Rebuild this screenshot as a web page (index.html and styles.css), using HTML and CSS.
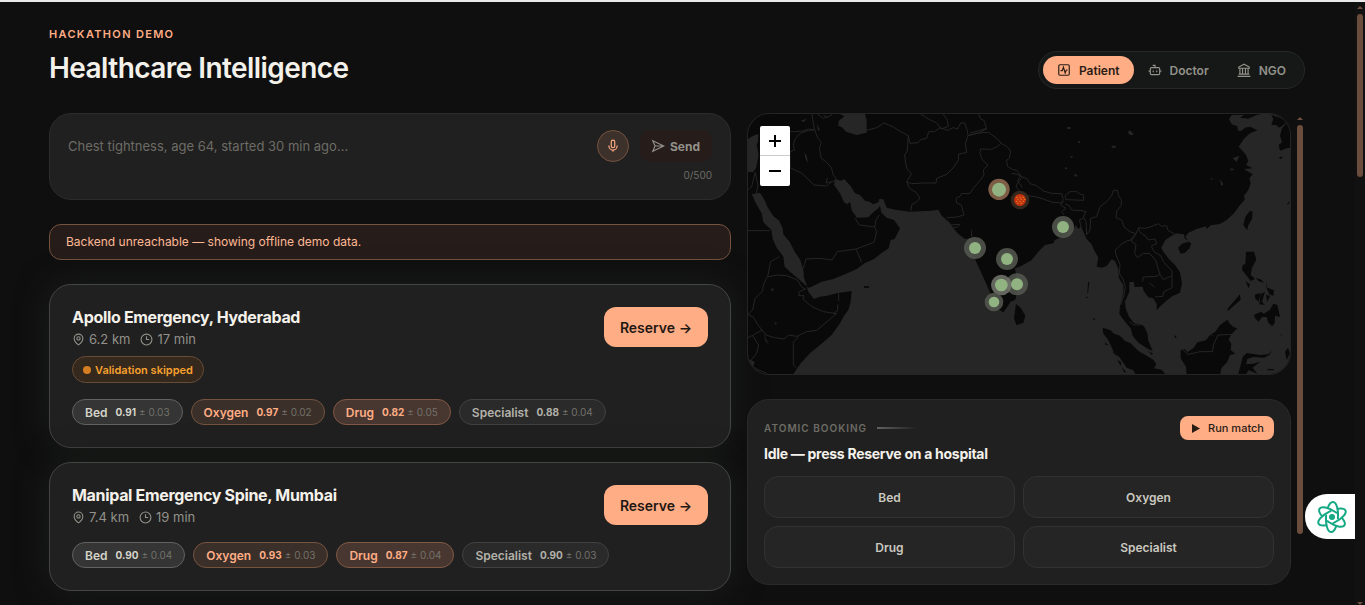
FILE: index.html
```html
<!DOCTYPE html>
<html lang="en">
<head>
<meta charset="utf-8">
<meta name="viewport" content="width=device-width, initial-scale=1">
<title>Healthcare Intelligence</title>
<link rel="stylesheet" href="styles.css">
</head>
<body>
<div class="page">
  <header class="header">
    <div class="brand">
      <p class="eyebrow">Hackathon demo</p>
      <h1 class="title">Healthcare Intelligence</h1>
    </div>
    <nav class="tabs" aria-label="Role">
      <button class="tab tab-active" type="button">
        <svg class="icon" viewBox="0 0 24 24"><rect x="3" y="3" width="18" height="18" rx="2"/><path d="M6 13h3l2-6 3 10 2-5h2"/></svg>
        Patient
      </button>
      <button class="tab" type="button">
        <svg class="icon" viewBox="0 0 24 24"><path d="M12 8V4H8"/><rect x="4" y="8" width="16" height="12" rx="2"/><path d="M1 14H4M20 14h3M9 13v3M15 13v3"/></svg>
        Doctor
      </button>
      <button class="tab" type="button">
        <svg class="icon" viewBox="0 0 24 24"><path d="M12 2 3 7v2h18V7zM5 10v9M9.500 10v9M14.500 10v9M19 10v9M3 19h18M1 23h22"/></svg>
        NGO
      </button>
    </nav>
  </header>

  <main class="columns">
    <section class="main-column">
      <form class="composer">
        <div class="composer-row">
          <input class="symptoms" type="text" aria-label="Symptoms" placeholder="Chest tightness, age 64, started 30 min ago...">
          <button class="mic" type="button" aria-label="Dictate">
            <svg class="icon" viewBox="0 0 24 24"><rect x="9" y="2" width="6" height="13" rx="3"/><path d="M5 11v1a7 7 0 0 0 14 0v-1M12 19v3"/></svg>
          </button>
          <button class="send" type="button">
            <svg class="icon" viewBox="0 0 24 24"><path d="M3 3 22 12 3 21l4-9zM7 12h15"/></svg>
            Send
          </button>
        </div>
        <p class="counter">0/500</p>
      </form>

      <p class="notice">Backend unreachable — showing offline demo data.</p>

      <div class="results">
        <article class="hospital">
          <div class="hospital-top">
            <div class="hospital-info">
              <h2 class="hospital-name">Apollo Emergency, Hyderabad</h2>
              <p class="meta">
                <span class="meta-item"><svg class="icon" viewBox="0 0 24 24"><path d="M20 10c0 6-8 12-8 12s-8-6-8-12a8 8 0 0 1 16 0z"/><circle cx="12" cy="10" r="3"/></svg>6.2 km</span>
                <span class="meta-item"><svg class="icon" viewBox="0 0 24 24"><circle cx="12" cy="12" r="10"/><path d="M12 6v6h5"/></svg>17 min</span>
              </p>
              <p class="badge"><span class="badge-dot"></span>Validation skipped</p>
            </div>
            <button class="reserve" type="button">Reserve →</button>
          </div>
          <ul class="chips">
            <li class="chip chip-neutral"><b class="chip-label">Bed</b><b>0.91</b><span class="margin">± 0.03</span></li>
            <li class="chip chip-warm"><b class="chip-label">Oxygen</b><b>0.97</b><span class="margin">± 0.02</span></li>
            <li class="chip chip-hot"><b class="chip-label">Drug</b><b>0.82</b><span class="margin">± 0.05</span></li>
            <li class="chip"><b class="chip-label">Specialist</b><b>0.88</b><span class="margin">± 0.04</span></li>
          </ul>
        </article>
        <article class="hospital">
          <div class="hospital-top">
            <div class="hospital-info">
              <h2 class="hospital-name">Manipal Emergency Spine, Mumbai</h2>
              <p class="meta">
                <span class="meta-item"><svg class="icon" viewBox="0 0 24 24"><path d="M20 10c0 6-8 12-8 12s-8-6-8-12a8 8 0 0 1 16 0z"/><circle cx="12" cy="10" r="3"/></svg>7.4 km</span>
                <span class="meta-item"><svg class="icon" viewBox="0 0 24 24"><circle cx="12" cy="12" r="10"/><path d="M12 6v6h5"/></svg>19 min</span>
              </p>
            </div>
            <button class="reserve" type="button">Reserve →</button>
          </div>
          <ul class="chips">
            <li class="chip chip-neutral"><b class="chip-label">Bed</b><b>0.90</b><span class="margin">± 0.04</span></li>
            <li class="chip chip-warm"><b class="chip-label">Oxygen</b><b>0.93</b><span class="margin">± 0.03</span></li>
            <li class="chip chip-hot"><b class="chip-label">Drug</b><b>0.87</b><span class="margin">± 0.04</span></li>
            <li class="chip"><b class="chip-label">Specialist</b><b>0.90</b><span class="margin">± 0.03</span></li>
          </ul>
        </article>
      </div>
    </section>

    <aside class="side-column">
      <div class="side-content">
        <section class="map" aria-label="Hospital map">
          <svg class="map-canvas" viewBox="24 27 1626 780" preserveAspectRatio="xMidYMid slice">
            <rect class="land" x="0" y="0" width="1700" height="840"/>
            <g class="sea">
              <path d="M200 545 205 560 222 582 240 575 258 573 290 565 335 558 332 590 325 615 312 632 300 655 275 690 250 712 210 745 182 775 158 810 1660 810 1660 0 1600 20 1550 30 1525 41 1500 38 1512 29 1475 30 1467 42 1475 58 1492 64 1494 77 1505 77 1515 68 1530 65 1552 76 1530 85 1512 101 1496 125 1510 140 1518 150 1525 168 1518 180 1538 190 1512 192 1538 208 1528 220 1532 235 1525 255 1512 272 1514 284 1500 300 1482 325 1460 345 1440 357 1412 361 1400 372 1398 364 1370 372 1345 383 1336 395 1344 407 1334 400 1332 388 1308 385 1295 392 1276 405 1264 428 1270 440 1285 460 1305 480 1320 502 1326 535 1320 563 1298 573 1282 585 1265 600 1250 615 1250 597 1240 580 1225 577 1211 558 1208 545 1184 546 1181 530 1168 532 1168 560 1155 590 1157 610 1167 635 1182 655 1200 658 1212 664 1222 684 1225 707 1238 738 1220 730 1194 712 1178 692 1172 670 1155 650 1138 627 1140 602 1150 565 1150 540 1137 520 1135 493 1125 468 1115 463 1100 483 1085 488 1070 485 1075 458 1062 435 1055 418 1040 402 1032 385 1023 365 1014 372 1008 360 1000 372 980 388 960 398 944 405 940 415 915 420 895 440 875 465 845 482 825 490 829 515 832 560 826 584 812 590 800 608 790 622 778 614 765 595 750 562 735 528 712 478 700 450 697 400 675 402 655 387 640 370 628 352 605 332 595 314 575 317 510 320 470 315 440 308 430 283 418 282 415 292 400 298 388 290 375 287 360 270 345 265 332 243 312 222 303 227 285 222 282 240 300 265 312 292 322 298 330 290 336 318 345 330 350 338 385 337 400 322 415 310 420 302 424 323 440 338 462 345 480 370 464 402 452 405 446 430 425 444 402 462 375 474 350 492 315 508 280 522 245 530 208 548z"/>
              <path d="M36 268 60 263 75 287 82 305 100 333 118 348 128 370 130 388 150 412 164 440 181 465 190 495 192 518 202 545 180 526 150 500 134 485 130 455 110 428 98 402 94 375 70 352 65 325 45 290z"/>
              <path d="M24 102 36 94 55 86 54 110 50 120 56 150 48 190 38 202 24 200z"/>
              <path d="M300 27 375 27 380 45 380 83 350 90 318 80 308 68 295 62 296 48 313 34z"/>
              <path d="M1163 82 1170 76 1178 84 1180 90 1170 90zM982 66h9v6h-9zM1014 108h5v6h-5zM1115 122h12v6h-12zM990 154h10l-6 6zM975 186l9 4-9 3zM1002 207l12 3-9 6zM1470 190l14 3-10 4zM1478 160l20-8-8 18zM1412 218l8 4-7 2zM1440 222l10 16-6 6zM193 140l8 16 3 18-8-14zM230 55l10 20-6 2zM184 46l16-4-10 10zM92 552l10-2-5 10zM72 684l6 18 8 16-10-10zM24 762l20 8-4 14-16-6zM104 652l8 2-7 5z"/>
            </g>
            <g class="land">
              <path d="M828 597 842 608 856 632 850 653 830 661 822 640z"/>
              <path d="M1314 428 1326 416 1345 410 1354 415 1348 430 1335 443 1322 446z"/>
              <path d="M1530 317 1538 320 1536 342 1524 362 1522 376 1510 360 1516 335z"/>
              <path d="M1518 440 1542 440 1549 464 1536 488 1532 510 1545 522 1532 528 1518 510 1506 494 1508 480 1516 478z"/>
              <path d="M1548 518 1564 524 1572 534 1555 528zM1578 528 1582 548 1602 556 1600 572 1588 568 1580 550zM1545 568 1562 565 1556 590 1545 580zM1562 568 1575 560 1566 590 1575 600 1558 598zM1578 570 1590 572 1582 590zM1516 528 1530 538 1526 550zM1500 568 1502 584 1464 618 1462 612zM1545 640 1542 630 1562 620 1572 626 1590 614 1600 596 1612 600 1620 636 1605 632 1604 655 1596 664 1584 652 1580 636 1566 636 1556 650z"/>
              <path d="M1088 668 1112 676 1122 686 1140 692 1155 708 1172 715 1195 738 1220 752 1240 764 1249 778 1242 790 1265 794 1278 810 1188 810 1180 796 1160 788 1138 756 1120 738 1105 705 1090 686z"/>
              <path d="M1095 712l10 8-8 0zM1118 738l12 10 4 8-14-12zM1132 764l12 8-2 12zM1144 786l14 14-4 4zM1225 738l14 8-4 4z"/>
              <path d="M1322 735 1334 732 1342 741 1360 730 1372 712 1398 706 1410 690 1426 680 1440 660 1462 644 1470 656 1480 666 1492 670 1474 688 1466 704 1474 716 1472 735 1486 746 1470 750 1462 770 1444 790 1440 810 1340 810 1338 785 1322 760z"/>
              <path d="M1494 810 1502 780 1508 756 1520 744 1560 750 1586 748 1596 736 1588 750 1572 758 1540 756 1522 762 1518 778 1540 776 1560 770 1538 788 1552 806 1526 796 1516 810zM1635 740 1644 728 1650 745 1640 765zM1582 792h20v4h-20zM1622 683l3 8-2 1zM1304 690l6 6-5 4zM1060 640h4v5h-4zM1044 532h4l-4 32h-2zM1038 575h4v5h-4zM372 543l16 1-2 5-14-1z"/>
              <path d="M1594 30 1620 38 1636 46 1638 54 1618 68 1608 60 1594 60 1600 42z"/>
              <path d="M1660 40 1638 56 1626 70 1620 92 1626 112 1616 120 1620 137 1640 130 1650 128 1660 127zM1615 158 1628 154 1624 162zM1640 298l10-10-4 10z"/>
            </g>
            <g class="borders">
              <path d="M216 27 220 55 224 75 234 100 244 112 238 130 244 160 260 172 274 188 280 210 290 222M224 75 205 72 190 78 160 80 148 80M224 75 205 76 180 85 164 104 160 122 164 135 150 140 150 188 186 205 222 240 260 243 275 230 290 225M262 218 258 234 275 230M232 27 250 40 270 33 278 27M250 30 262 38"/>
              <path d="M380 76 410 68 432 54 460 66 482 80 505 92 510 115 534 113 542 104 560 100 566 80 584 80 600 68 622 76 640 68 652 72 662 54 674 54 682 76 684 92 715 84 740 72M505 92 503 118 502 138 494 150 497 176 502 194 515 206 500 230 515 236 550 234 588 234 590 220 620 208 640 188 656 164 655 148 680 142 676 116 684 92M500 230 508 250 528 262 540 280 530 290 516 298 512 318"/>
              <path d="M542 27 566 42 590 54 604 72 625 64 622 46 610 27M716 27 722 42 732 46 740 72M740 70 715 78 690 84M684 92 715 84 745 82 768 98 784 115 772 124 755 133 722 132 720 146 728 166 744 180 730 194 732 210 722 224 700 250 690 265 664 266 660 274 648 280 650 294 664 300 668 315 672 330 650 336 620 338M784 115 800 124 812 138 808 160 800 165 802 184 815 192 830 196 842 212 832 228 840 236 846 248M695 374v20l12 8M630 360l30-2-8 8-20 4"/>
              <path d="M815 205 832 208 848 216 862 222 870 236 890 242 910 258 935 265 965 266 970 284 964 294 938 292 910 282 886 275 860 272 840 260 828 246 835 230 848 216M978 284 975 272 990 260 1010 260 1022 268 1031 270 1031 286 1005 285 985 284zM970 290 962 300 978 310 965 320 972 330M975 296 990 304 994 315 1026 317 1038 320 1030 336 1038 350 1040 390M1030 340 1018 345 1022 360 1028 388M1040 388 1050 376 1052 340 1070 335 1080 305 1100 290 1115 272 1120 256 1132 256 1136 272 1144 285 1144 302 1130 318 1128 338 1146 346 1152 366 1170 380 1188 386"/>
              <path d="M1188 386 1176 404 1160 408 1146 416 1126 435 1128 450 1140 478 1138 505 1150 525 1156 545 1152 570 1142 600M1188 386 1176 398 1175 410 1188 418 1184 445 1192 458 1210 445 1230 446 1248 468 1252 484 1260 508 1248 514 1210 516 1208 530M1188 386 1196 368 1216 370 1230 366 1256 356 1264 364 1280 362 1284 376 1302 386M1196 368 1198 380 1218 395 1225 405 1245 402 1250 415 1234 424 1242 440 1262 452 1270 470 1296 498 1296 548 1272 560 1268 574 1245 576M1260 508 1270 524 1296 512M1168 650 1182 660 1200 660M1228 534l16 12M1326 732 1344 748 1380 740 1418 740 1420 720 1434 690 1480 688M1406 680 1416 692"/>
              <path d="M46 205 54 240 48 268 36 268M46 200 35 245 24 255M24 377H90M344 338 358 360 404 366 410 380 402 412 348 432 292 440 276 465 240 460 198 462 190 490M348 432 365 472M404 366 408 345 418 330M118 455 92 470 84 510 70 540 68 558 45 580 38 615 24 628M84 516 110 510 140 512 172 525 184 545 196 552 178 560 176 572 192 572 190 584 216 605 250 620 290 626 230 676 200 680 170 694 146 690 132 702 104 698 78 690 66 675 54 660 40 636 24 628M66 675 40 690 24 698M176 694 160 712V780L170 790M38 692 56 720 50 745 34 765M24 775 50 792 80 805M296 565V588M294 598 292 618 280 626"/>
            </g>
            <g class="marker">
              <circle class="halo halo-brown" cx="777" cy="253" r="32"/><circle class="dot" cx="777" cy="254" r="21"/>
              <circle class="halo halo-dark" cx="840" cy="285" r="28"/><circle class="dot dot-red" cx="840" cy="285" r="18"/>
              <path class="hatch" d="M828 277h4m6 0h4m6 0h4m-20 6h4m6 0h4m6 0h4m-28 6h4m6 0h4m6 0h4m-20 6h4m6 0h4"/>
              <circle class="halo" cx="969" cy="366" r="33"/><circle class="dot" cx="969" cy="366" r="18"/>
              <circle class="halo" cx="705" cy="429" r="33"/><circle class="dot" cx="705" cy="429" r="18"/>
              <circle class="halo" cx="801" cy="462" r="33"/><circle class="dot" cx="801" cy="462" r="18"/>
              <circle class="halo" cx="831" cy="538" r="33"/><circle class="halo halo-light" cx="784" cy="540" r="31"/>
              <circle class="dot" cx="831" cy="538" r="18"/><circle class="dot" cx="784" cy="540" r="19"/>
              <circle class="halo" cx="762" cy="591" r="28"/><circle class="dot" cx="762" cy="591" r="16"/>
            </g>
          </svg>
          <div class="zoom">
            <button class="zoom-button" type="button" aria-label="Zoom in"><svg viewBox="0 0 12 12"><path d="M6 0v12M0 6h12"/></svg></button>
            <button class="zoom-button" type="button" aria-label="Zoom out"><svg viewBox="0 0 12 12"><path d="M0 6h12"/></svg></button>
          </div>
        </section>

        <section class="booking">
          <div class="booking-top">
            <p class="booking-label">Atomic booking</p>
            <button class="run" type="button"><svg viewBox="0 0 8 9"><path d="M0 0v9l8-4.500z"/></svg>Run match</button>
          </div>
          <h2 class="booking-title">Idle — press Reserve on a hospital</h2>
          <div class="resources">
            <div class="resource">Bed</div>
            <div class="resource">Oxygen</div>
            <div class="resource">Drug</div>
            <div class="resource">Specialist</div>
          </div>
        </section>
      </div>
      <div class="side-scroll" aria-hidden="true"><span class="arrow"></span><span class="side-thumb"></span></div>
    </aside>
  </main>
</div>

<div class="page-scroll" aria-hidden="true"><span class="arrow"></span><span class="page-thumb"></span><span class="arrow arrow-down"></span></div>

<button class="assistant" type="button" aria-label="Open assistant">
  <svg viewBox="0 0 36 36">
    <g class="orbits">
      <ellipse cx="18" cy="18" rx="15" ry="6" pathLength="100" transform="rotate(94 18 18)"/>
      <ellipse cx="18" cy="18" rx="15" ry="6" pathLength="100" transform="rotate(34 18 18)"/>
      <ellipse cx="18" cy="18" rx="15" ry="6" pathLength="100" transform="rotate(-26 18 18)"/>
    </g>
    <circle class="core" cx="18" cy="18" r="3"/>
  </svg>
</button>
</body>
</html>
```
FILE: styles.css
```css
* { box-sizing: border-box; }

body {
  margin: 0;
  min-height: 100vh;
  overflow: hidden;
  border-top: 2px solid #e9e9e9;
  background: #0f0f0f;
  color: #f4f1ea;
  font-family: Inter, "Liberation Sans", sans-serif;
  font-size: 13px;
}

h1, h2, p, ul { margin: 0; padding: 0; }
ul { list-style: none; }
button, input { font: inherit; color: inherit; border: 0; margin: 0; padding: 0; background: none; }

.icon {
  width: 14px;
  height: 14px;
  flex: none;
  fill: none;
  stroke: currentColor;
  stroke-width: 2;
}

.page { padding: 24px 60px 14px 49px; }

/* Header */
.header {
  display: flex;
  justify-content: space-between;
  align-items: flex-end;
  margin-bottom: 24px;
}
.eyebrow {
  color: #ffad85;
  font-size: 11px;
  font-weight: 600;
  line-height: 16px;
  letter-spacing: 0.12em;
  text-transform: uppercase;
}
.title {
  margin: 8px 0 3px;
  font-size: 28px;
  font-weight: 600;
  line-height: 36px;
  letter-spacing: -0.02em;
}
.tabs {
  display: flex;
  padding: 4px;
  border: 1px solid #262827;
  border-radius: 20px;
  background: #161817;
}
.tab {
  display: flex;
  align-items: center;
  gap: 8px;
  height: 28px;
  padding: 0 14px;
  border-radius: 14px;
  color: #92918a;
  font-size: 12px;
  font-weight: 600;
}
.tab-active { background: #ffad85; color: #2a1c15; }

/* Columns */
.columns { display: flex; gap: 16px; }
.main-column { flex: 11 1 0; min-width: 0; }
.side-column { flex: 9 1 0; min-width: 0; display: flex; gap: 4px; }
.side-content { flex: 1; min-width: 0; }

/* Composer */
.composer {
  padding: 16px 18px;
  border: 1px solid #2c2c2c;
  border-radius: 22px;
  background: #202020;
}
.composer-row { display: flex; align-items: center; }
.symptoms { flex: 1; min-width: 0; height: 32px; outline: 0; }
.symptoms::placeholder { color: #6d6c65; opacity: 1; }
.mic {
  display: grid;
  place-items: center;
  width: 32px;
  height: 32px;
  margin-right: 11px;
  border: 1px solid #76533f;
  border-radius: 50%;
  background: #3d312b;
  color: #ffad85;
}
.send {
  display: flex;
  align-items: center;
  gap: 5px;
  height: 32px;
  padding: 0 12px 0 11px;
  border-radius: 10px;
  background: #261c1a;
  color: #92918a;
  font-size: 12px;
  font-weight: 700;
}
.counter { padding-top: 6px; color: #6d6c65; font-size: 10px; line-height: 15px; text-align: right; }

.notice {
  margin: 24px 0;
  padding: 8px 16px;
  border: 1px solid #76533f;
  border-radius: 12px;
  background: #261d1b;
  color: #ffb893;
  font-size: 12px;
  line-height: 18px;
}

/* Hospitals */
.results { display: grid; gap: 14px; }
.hospital {
  padding: 22px;
  border: 1px solid #434543;
  border-radius: 22px;
  background: #202020;
  box-shadow: 0 0 32px #1a1e1b;
}
.hospital-top { display: flex; justify-content: space-between; align-items: flex-start; }
.hospital-name { font-size: 16px; font-weight: 700; line-height: 20px; letter-spacing: -0.02em; }
.meta { display: flex; gap: 10px; margin-top: 3px; color: #92918a; font-size: 13px; line-height: 18px; }
.meta-item { display: flex; align-items: center; gap: 4px; }
.meta .icon { width: 13px; height: 13px; }
.badge {
  display: inline-flex;
  align-items: center;
  gap: 4px;
  height: 27px;
  margin-top: 8px;
  padding: 0 10px;
  border: 1px solid #684c36;
  border-radius: 14px;
  background: #35281d;
  color: #f7a12f;
  font-size: 11px;
  font-weight: 600;
}
.badge-dot { width: 8px; height: 8px; border-radius: 50%; background: #d77d22; }
.reserve {
  height: 40px;
  padding: 0 16px;
  border-radius: 12px;
  background: #ffad85;
  color: #1f1712;
  font-size: 14px;
  font-weight: 600;
}
.chips { display: flex; flex-wrap: wrap; gap: 8px; margin-top: 16px; }
.chip {
  display: flex;
  align-items: center;
  height: 26px;
  padding: 0 12px;
  border: 1px solid #414141;
  border-radius: 13px;
  background: #2a2a2a;
  color: #b3b1a9;
  font-size: 10px;
}
.chip b { font-weight: 700; }
.chip .chip-label { margin-right: 8px; font-size: 12px; font-weight: 600; }
.chip-neutral { border-color: #60635f; background: #343534; color: #d5d3c9; }
.chip-warm { border-color: #76533f; background: #3a2f29; color: #ffad85; }
.chip-hot { border-color: #805843; background: #483730; color: #ffad85; }
.margin { margin-left: 3px; color: #73716b; }

/* Map */
.map {
  position: relative;
  overflow: hidden;
  border: 1px solid #242424;
  border-radius: 22px;
  background: #262626;
}
.map-canvas { display: block; width: 100%; }
.land { fill: #090909; }
.sea { fill: #262626; }
.borders { fill: none; stroke: #252525; stroke-width: 3; stroke-linejoin: round; }
.halo { fill: #555951; fill-opacity: 0.85; }
.halo-brown { fill: #936c52; }
.halo-dark { fill: #3b2c20; }
.halo-light { fill: #74766d; }
.dot { fill: #91b381; }
.dot-red { fill: #c43212; }
.hatch { fill: none; stroke: #e18a22; stroke-width: 3; }
.zoom {
  position: absolute;
  top: 12px;
  left: 12px;
  display: grid;
  overflow: hidden;
  border-radius: 2px;
  background: #fff;
}
.zoom-button { display: grid; place-items: center; width: 30px; height: 30px; }
.zoom-button:first-child { border-bottom: 1px solid #ccc; }
.zoom-button svg { width: 12px; height: 12px; stroke: #000; stroke-width: 2; }

/* Booking */
.booking {
  margin-top: 24px;
  padding: 16px;
  border: 1px solid #2a2a2a;
  border-radius: 22px;
  background: #202020;
}
.booking-top { display: flex; justify-content: space-between; align-items: center; }
.booking-label {
  display: flex;
  align-items: center;
  gap: 10px;
  color: #6d6c65;
  font-size: 10px;
  font-weight: 600;
  letter-spacing: 0.1em;
  text-transform: uppercase;
}
.booking-label::after {
  content: "";
  width: 40px;
  height: 2px;
  background: linear-gradient(90deg, #606360, transparent);
}
.run {
  display: flex;
  align-items: center;
  gap: 8px;
  height: 24px;
  padding: 0 10px 0 12px;
  border-radius: 8px;
  background: #ffad85;
  color: #2a1c15;
  font-size: 11px;
  font-weight: 500;
}
.run svg { width: 8px; height: 9px; fill: currentColor; }
.booking-title { margin: 4px 0 12px; font-size: 14px; font-weight: 700; line-height: 20px; letter-spacing: -0.02em; }
.resources { display: grid; grid-template-columns: 1fr 1fr; gap: 8px; }
.resource {
  display: grid;
  place-items: center;
  height: 42px;
  border: 1px solid #323232;
  border-radius: 14px;
  background: #252525;
  color: #cbc9c0;
  font-size: 12px;
  font-weight: 600;
}

/* Scroll rails */
.side-scroll, .page-scroll { display: flex; flex-direction: column; align-items: center; width: 10px; }
.arrow {
  width: 0;
  height: 0;
  margin: 4px 0 5px;
  border: 3px solid transparent;
  border-top: 0;
  border-bottom-color: #704f3f;
}
.side-thumb { width: 6px; height: 409px; border-radius: 3px; background: #6a4d3c; }
.page-scroll { position: fixed; top: 2px; right: 0; bottom: 0; background: #111; }
.page-thumb { width: 6px; height: 27%; border-radius: 3px; background: #6a4d3c; }
.arrow-down { margin: auto 0 0; transform: rotate(180deg); }

/* Floating assistant */
.assistant {
  position: fixed;
  right: 10px;
  bottom: 66px;
  display: grid;
  place-items: center;
  width: 50px;
  height: 45px;
  padding-left: 4px;
  border-radius: 22px 0 0 22px;
  background: #fff;
}
.assistant svg { width: 36px; height: 36px; }
.orbits { fill: none; stroke: #14a884; stroke-width: 2; stroke-dasharray: 40 10; stroke-dashoffset: 12; }
.core { fill: #14a884; }
```
